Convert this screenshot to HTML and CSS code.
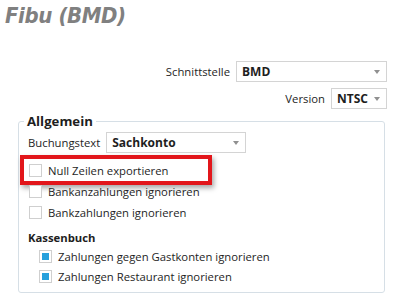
FILE: index.html
```html
<!DOCTYPE html>
<html lang="de">
<head>
    <meta charset="UTF-8">
    <title>Fibu (BMD)</title>
    <link rel="stylesheet" href="styles.css">
</head>
<body>

    <h1 class="title">Fibu (BMD)</h1>

    <div class="settings">
        <div class="field">
            <span class="label">Schnittstelle</span>
            <div class="combo combo-wide"><span>BMD</span><i class="arrow"></i></div>
        </div>
        <div class="field">
            <span class="label">Version</span>
            <div class="combo combo-narrow"><span>NTSC</span><i class="arrow"></i></div>
        </div>
    </div>

    <fieldset class="group">
        <legend>Allgemein</legend>

        <div class="field field-left">
            <span class="label">Buchungstext</span>
            <div class="combo combo-mid"><span>Sachkonto</span><i class="arrow"></i></div>
        </div>

        <div class="check highlight"><span class="box"></span>Null Zeilen exportieren</div>
        <div class="check"><span class="box"></span>Bankanzahlungen ignorieren</div>
        <div class="check"><span class="box"></span>Bankzahlungen ignorieren</div>

        <div class="section-title">Kassenbuch</div>
        <div class="check check-sub"><span class="box checked"></span>Zahlungen gegen Gastkonten ignorieren</div>
        <div class="check check-sub"><span class="box checked"></span>Zahlungen Restaurant ignorieren</div>
    </fieldset>

</body>
</html>
```

FILE: styles.css
```css
/* Einstellungsseite Fibu */
body {
    margin: 0;
    background-color: #fff;
    font-family: "Open Sans", "Noto Sans", sans-serif;
    font-size: 11.3px;
    color: #1e1e1e;
}
.title {
    margin: 0;
    padding: 2px 0 0 5px;
    font-family: "DejaVu Sans Condensed", "DejaVu Sans", Verdana, sans-serif;
    font-size: 22px;
    font-weight: bold;
    font-style: italic;
    letter-spacing: -0.4px;
    line-height: 28px;
    color: #808080;
}
.settings {
    display: flex;
    flex-direction: column;
    align-items: flex-end;
    gap: 6px;
    margin-top: 31px;
    padding-right: 9px;
}
.field {
    display: flex;
    align-items: center;
    gap: 6px;
}
.combo {
    display: flex;
    align-items: center;
    justify-content: space-between;
    box-sizing: border-box;
    height: 21px;
    padding: 0 6px 0 5px;
    border: 1px solid #d4d4d4;
    font-size: 12px;
    font-weight: bold;
}
.combo-wide {
    width: 151px;
}
.combo-narrow {
    width: 56px;
}
.combo-mid {
    width: 140px;
}
.arrow {
    width: 0;
    height: 0;
    border-left: 3px solid transparent;
    border-right: 3px solid transparent;
    border-top: 4px solid #909090;
}
.group {
    margin: 3px 11px 0 18px;
    padding: 2px 0 6px 9px;
    border: 1px solid #d6dfe6;
    border-radius: 3px;
}
.group legend {
    margin-left: -4px;
    padding: 0 3px;
    font-size: 13.2px;
    font-weight: bold;
    line-height: 18px;
}
.check {
    display: flex;
    align-items: center;
    gap: 6px;
    height: 21px;
    margin-left: 1px;
}
.highlight {
    width: 179px;
    height: 22px;
    margin: 6px 0 0 -4px;
    padding-left: 5px;
    box-shadow: 0 0 0 4px #e2161b, 2px 3px 5px 4px rgba(0, 0, 0, 0.35);
}
.box {
    box-sizing: border-box;
    width: 13px;
    height: 13px;
    padding: 2px;
    border: 1px solid #cfcfcf;
    background-color: #fff;
}
.box.checked::after {
    content: "";
    display: block;
    width: 7px;
    height: 7px;
    background-color: #27a0dc;
}
.section-title {
    margin-top: 7px;
    font-weight: bold;
    line-height: 16px;
}
.check-sub {
    height: 20px;
    margin-left: 11px;
}
```
